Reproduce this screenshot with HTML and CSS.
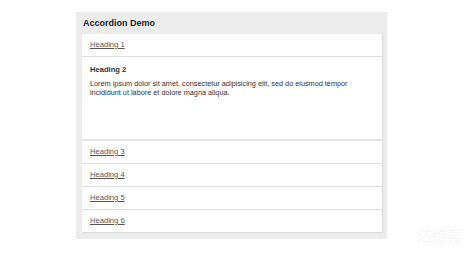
FILE: index.html
```html
<!DOCTYPE html>
<html lang="en">
<head>
  <meta charset="UTF-8">
  <title>Accordion Demo</title>
  <link rel="stylesheet" href="styles.css">
</head>
<body>
  <div class="accordion">
    <h1>Accordion Demo</h1>
    <div class="panels">
      <div class="panel"><a href="#">Heading 1</a></div>
      <div class="panel open">
        <h2>Heading 2</h2>
        <p>Lorem ipsum dolor sit amet, consectetur adipisicing elit, sed do eiusmod tempor incididunt ut labore et dolore magna aliqua.</p>
      </div>
      <div class="panel"><a href="#">Heading 3</a></div>
      <div class="panel"><a href="#">Heading 4</a></div>
      <div class="panel"><a href="#">Heading 5</a></div>
      <div class="panel"><a href="#">Heading 6</a></div>
    </div>
  </div>
  <div class="watermark">达维营</div>
</body>
</html>
```

FILE: styles.css
```css
body {
  margin: 0;
  background: #fff;
  font-family: "Liberation Sans", Arial, sans-serif;
  color: #333;
}

.accordion {
  width: 300px;
  margin: 12px 0 0 76px;
  padding: 0 5px 7px 6px;
  background-color: #ececec;
}

.accordion h1 {
  margin: 0;
  height: 22px;
  line-height: 22px;
  padding-left: 1px;
  font-size: 9px;
  font-weight: bold;
  color: #222;
}

.panels {
  background: #fff;
  box-shadow: 1px 1px 1px #ddd;
}

.panel {
  height: 22px;
  line-height: 22px;
  padding-left: 8px;
  border-bottom: 1px solid #dedede;
  font-size: 7.6px;
}

.panel:last-child {
  border-bottom: none;
}

.panel a {
  color: #555;
}

.panel.open {
  box-sizing: border-box;
  height: 84px;
  padding: 8px 8px 0 8px;
  line-height: normal;
  border-bottom: 2px solid #e4e4e4;
}

.open h2 {
  margin: 0;
  font-size: 7.6px;
  font-weight: bold;
  color: #333;
}

.open p {
  margin: 6px 0 0;
  font-size: 7.3px;
  line-height: 8.5px;
  color: #333;
}

.watermark {
  position: absolute;
  left: 417px;
  top: 224px;
  font-size: 15px;
  color: #f5f5f5;
  font-family: "Noto Sans CJK SC", sans-serif;
}
```
